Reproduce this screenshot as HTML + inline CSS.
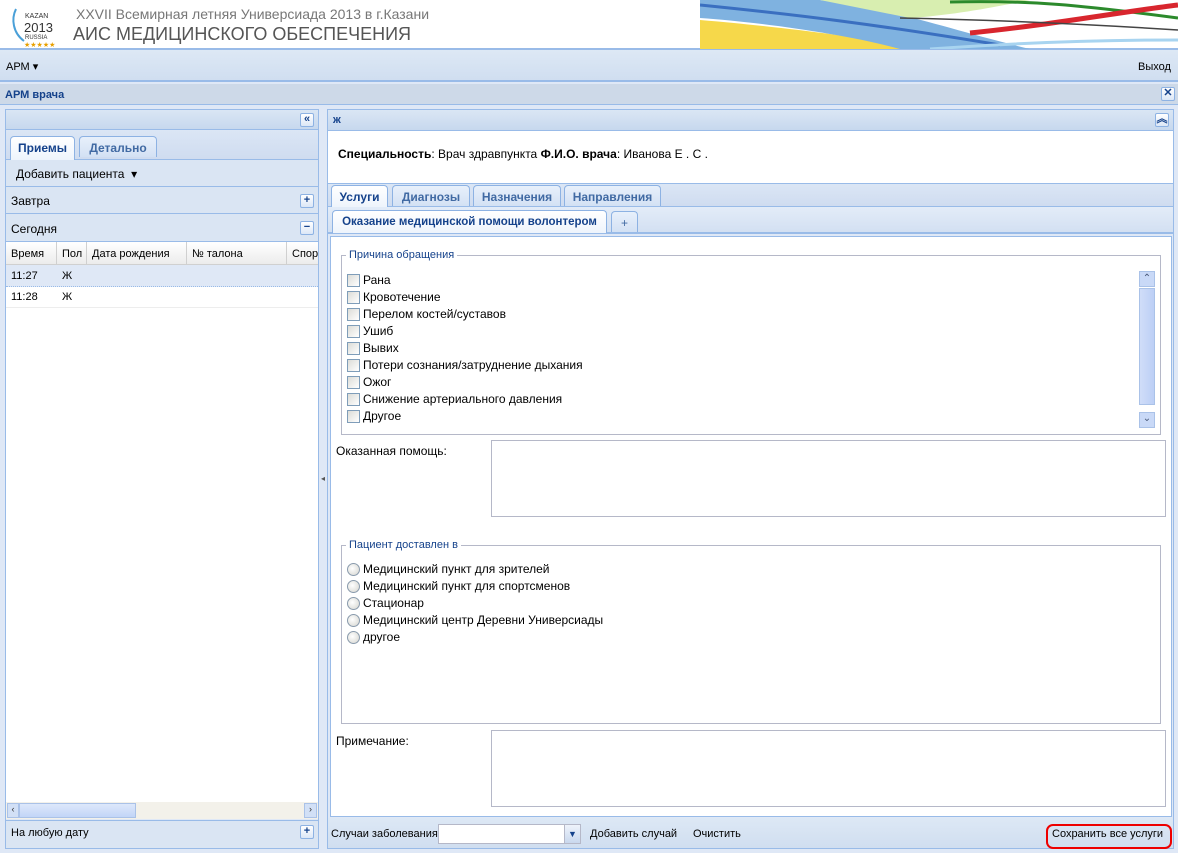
<!DOCTYPE html>
<html><head><meta charset="utf-8"><style>
*{box-sizing:border-box;margin:0;padding:0}
body{width:1178px;height:853px;overflow:hidden;position:relative;background:#dfe8f6;font-family:"Liberation Sans",Tahoma,sans-serif;font-size:12px;color:#000}
.a{position:absolute}
.hdrbar{background:linear-gradient(#dae6f4,#c7d8ee);border:1px solid #99bbe8}
.btn{position:absolute;width:14px;height:14px;border:1px solid #8db2e3;border-radius:2px;background:linear-gradient(#fff,#dbe7f7);color:#15428b;font-size:11px;line-height:11px;text-align:center;font-weight:bold}
.tab{position:absolute;border:1px solid #8db2e3;border-bottom:none;border-radius:4px 4px 0 0;background:linear-gradient(#e8f0fb,#d3e1f4);color:#416aa3;font-weight:bold;font-size:12px;text-align:center;padding-top:4px}
.tab.on{background:linear-gradient(#fff,#eef4fc);color:#15428b;height:24px}
.cb{position:absolute;width:13px;height:13px;border:1px solid #7f9db9;background:linear-gradient(135deg,#dcdcd7,#fff)}
.rb{position:absolute;width:13px;height:13px;border:1px solid #8a9bad;border-radius:50%;background:radial-gradient(circle at 40% 40%,#fff,#d4d4ce)}
.lbl{position:absolute;font-size:12px}
.fs{position:absolute;border:1px solid #b5b8c8}
.leg{position:absolute;background:#fff;color:#15428b;font-size:11px;padding:0 3px}
.ta{position:absolute;border:1px solid #b5b8c8;background:#fff}
</style></head><body>
<div class="a" style="left:0;top:0;width:1178px;height:50px;background:#fff;border-bottom:2px solid #99bbe8"></div>
<svg class="a" style="left:700px;top:0" width="478" height="49">
<path d="M0 20 C120 30 200 45 240 49 L0 49Z" fill="#f6d84a"/>
<path d="M0 0 L120 0 C200 10 250 30 330 49 L200 49 C150 35 60 22 0 18Z" fill="#7fb2e0"/>
<path d="M0 5 C100 15 180 25 300 45" stroke="#3a6fc0" stroke-width="3" fill="none"/>
<path d="M120 0 L330 0 C280 10 250 15 210 18Z" fill="#d8eeb0"/>
<path d="M250 2 C330 0 380 5 478 18" stroke="#2c8a2c" stroke-width="3" fill="none"/>
<path d="M270 33 C350 25 420 12 478 5" stroke="#d8262e" stroke-width="5" fill="none"/>
<path d="M200 18 C300 20 400 25 478 30" stroke="#444" stroke-width="1.5" fill="none"/>
<path d="M230 49 C300 44 380 40 478 40" stroke="#a8d4f0" stroke-width="3" fill="none"/>
</svg>
<svg class="a" style="left:10px;top:5px" width="45" height="44">
<path d="M6 4 C1 14 3 28 14 36" stroke="#4aa0d8" stroke-width="2" fill="none"/>
<text x="15" y="13" font-size="7" font-family="Liberation Sans" fill="#333">KAZAN</text>
<text x="14" y="27" font-size="13" font-family="Liberation Sans" fill="#333">2013</text>
<text x="15" y="34" font-size="6" font-family="Liberation Sans" fill="#333">RUSSIA</text>
<text x="14" y="42" font-size="7" fill="#e8a000">★★★★★</text>
</svg>
<div class="a" style="left:76px;top:6px;font-size:14px;color:#777">XXVII Всемирная летняя Универсиада 2013 в г.Казани</div>
<div class="a" style="left:73px;top:24px;font-size:18px;color:#555">АИС МЕДИЦИНСКОГО ОБЕСПЕЧЕНИЯ</div>
<div class="a" style="left:0;top:50px;width:1178px;height:32px;background:linear-gradient(#dde8f5,#d0def0);border-bottom:2px solid #99bbe8"></div>
<div class="a" style="left:6px;top:60px;font-size:11px">АРМ ▾</div>
<div class="a" style="left:1138px;top:61px;font-size:11px">Выход</div>
<div class="a" style="left:0;top:84px;width:1178px;height:21px;background:#cdd9e8;border-bottom:1px solid #99bbe8"></div>
<div class="a" style="left:5px;top:89px;font-weight:bold;color:#15428b;font-size:11px">АРМ врача</div>
<div class="btn" style="left:1161px;top:87px">✕</div>
<div class="a" style="left:5px;top:109px;width:314px;height:740px;border:1px solid #99bbe8;background:#dfe8f6"></div>
<div class="a hdrbar" style="left:5px;top:109px;width:314px;height:21px"></div>
<div class="btn" style="left:300px;top:113px">«</div>
<div class="a" style="left:6px;top:130px;width:312px;height:30px;background:linear-gradient(#dbe6f5,#cfdcf0);border-bottom:1px solid #99bbe8"></div>
<div class="tab on" style="left:10px;top:136px;width:65px">Приемы</div>
<div class="tab" style="left:79px;top:136px;width:78px;height:21px">Детально</div>
<div class="a" style="left:6px;top:160px;width:312px;height:27px;background:#dae5f3;border-bottom:1px solid #99bbe8"></div>
<div class="a" style="left:16px;top:167px;font-size:12px">Добавить пациента &nbsp;▾</div>
<div class="a" style="left:6px;top:187px;width:312px;height:27px;background:#dae5f3;border-bottom:1px solid #99bbe8"></div>
<div class="a" style="left:11px;top:194px">Завтра</div>
<div class="btn" style="left:300px;top:194px">+</div>
<div class="a" style="left:6px;top:214px;width:312px;height:28px;background:#dae5f3;border-bottom:1px solid #99bbe8"></div>
<div class="a" style="left:11px;top:222px">Сегодня</div>
<div class="btn" style="left:300px;top:221px">−</div>
<div class="a" style="left:6px;top:242px;width:312px;height:560px;background:#fff"></div>
<div class="a" style="left:6px;top:242px;width:312px;height:23px;background:linear-gradient(#fff,#ececec);border-bottom:1px solid #d0d0d0"></div>
<div class="a" style="left:11px;top:248px;font-size:11px">Время</div>
<div class="a" style="left:56px;top:242px;height:23px;border-left:1px solid #d0d0d0"></div>
<div class="a" style="left:62px;top:248px;font-size:11px">Пол</div>
<div class="a" style="left:86px;top:242px;height:23px;border-left:1px solid #d0d0d0"></div>
<div class="a" style="left:92px;top:248px;font-size:11px">Дата рождения</div>
<div class="a" style="left:186px;top:242px;height:23px;border-left:1px solid #d0d0d0"></div>
<div class="a" style="left:192px;top:248px;font-size:11px">№ талона</div>
<div class="a" style="left:286px;top:242px;height:23px;border-left:1px solid #d0d0d0"></div>
<div class="a" style="left:292px;top:248px;font-size:11px;width:26px;overflow:hidden;white-space:nowrap">Спорт</div>
<div class="a" style="left:6px;top:265px;width:312px;height:22px;background:#dfe8f6;border-bottom:1px dotted #99bbe8"></div>
<div class="a" style="left:11px;top:270px;font-size:11px">11:27</div><div class="a" style="left:62px;top:270px;font-size:11px">Ж</div>
<div class="a" style="left:6px;top:287px;width:312px;height:21px;border-bottom:1px solid #ededed"></div>
<div class="a" style="left:11px;top:291px;font-size:11px">11:28</div><div class="a" style="left:62px;top:291px;font-size:11px">Ж</div>
<div class="a" style="left:6px;top:802px;width:312px;height:17px;background:#f3f1ea"></div>
<div class="a" style="left:7px;top:803px;width:12px;height:15px;border:1px solid #aac2e8;background:#d2e0f6;font-size:9px;text-align:center;color:#333">‹</div>
<div class="a" style="left:19px;top:803px;width:117px;height:15px;border:1px solid #aac2e8;background:linear-gradient(#dde8fb,#c2d5f7)"></div>
<div class="a" style="left:304px;top:803px;width:13px;height:15px;border:1px solid #aac2e8;background:#d2e0f6;font-size:9px;text-align:center;color:#333">›</div>
<div class="a" style="left:6px;top:820px;width:312px;height:28px;background:#dae5f3;border-top:1px solid #99bbe8"></div>
<div class="a" style="left:11px;top:827px;font-size:11px">На любую дату</div>
<div class="btn" style="left:300px;top:825px">+</div>
<div class="a" style="left:321px;top:474px;font-size:8px;color:#555">◂</div>
<div class="a" style="left:327px;top:109px;width:847px;height:740px;border:1px solid #99bbe8;background:#dfe8f6"></div>
<div class="a hdrbar" style="left:327px;top:109px;width:847px;height:22px"></div>
<div class="a" style="left:333px;top:114px;font-weight:bold;color:#15428b;font-size:11px">ж</div>
<div class="btn" style="left:1155px;top:113px">︽</div>
<div class="a" style="left:328px;top:131px;width:845px;height:53px;background:#fff;border-bottom:1px solid #99bbe8"></div>
<div class="a" style="left:338px;top:147px;font-size:12px"><b>Специальность</b>: Врач здравпункта <b>Ф.И.О. врача</b>: Иванова Е . С .</div>
<div class="a" style="left:328px;top:184px;width:845px;height:23px;background:linear-gradient(#dbe6f5,#cfdcf0);border-bottom:1px solid #99bbe8"></div>
<div class="tab on" style="left:331px;top:185px;width:57px;height:22px">Услуги</div>
<div class="tab" style="left:392px;top:185px;width:78px;height:21px">Диагнозы</div>
<div class="tab" style="left:473px;top:185px;width:88px;height:21px">Назначения</div>
<div class="tab" style="left:564px;top:185px;width:97px;height:21px">Направления</div>
<div class="a" style="left:328px;top:207px;width:845px;height:27px;background:linear-gradient(#e3ecf8,#d3e0f2);border-bottom:2px solid #99bbe8"></div>
<div class="tab on" style="left:332px;top:210px;width:275px;height:23px;padding-top:5px;font-size:11.5px">Оказание медицинской помощи волонтером</div>
<div class="tab" style="left:611px;top:211px;width:27px;height:21px;font-weight:normal">+</div>
<div class="a" style="left:330px;top:236px;width:842px;height:581px;background:#fff;border:1px solid #99bbe8"></div>
<div class="fs" style="left:341px;top:255px;width:820px;height:180px"></div>
<div class="leg" style="left:346px;top:249px">Причина обращения</div>
<div class="cb" style="left:347px;top:274px"></div><div class="lbl" style="left:363px;top:273px">Рана</div>
<div class="cb" style="left:347px;top:291px"></div><div class="lbl" style="left:363px;top:290px">Кровотечение</div>
<div class="cb" style="left:347px;top:308px"></div><div class="lbl" style="left:363px;top:307px">Перелом костей/суставов</div>
<div class="cb" style="left:347px;top:325px"></div><div class="lbl" style="left:363px;top:324px">Ушиб</div>
<div class="cb" style="left:347px;top:342px"></div><div class="lbl" style="left:363px;top:341px">Вывих</div>
<div class="cb" style="left:347px;top:359px"></div><div class="lbl" style="left:363px;top:358px">Потери сознания/затруднение дыхания</div>
<div class="cb" style="left:347px;top:376px"></div><div class="lbl" style="left:363px;top:375px">Ожог</div>
<div class="cb" style="left:347px;top:393px"></div><div class="lbl" style="left:363px;top:392px">Снижение артериального давления</div>
<div class="cb" style="left:347px;top:410px"></div><div class="lbl" style="left:363px;top:409px">Другое</div>
<div class="a" style="left:1139px;top:271px;width:16px;height:16px;border:1px solid #aac2e8;background:#c9d9f7;font-size:10px;text-align:center;color:#4a5a7a;line-height:14px">⌃</div>
<div class="a" style="left:1139px;top:288px;width:16px;height:117px;border:1px solid #aac2e8;background:linear-gradient(90deg,#d0ddf8,#bccff6)"></div>
<div class="a" style="left:1139px;top:412px;width:16px;height:16px;border:1px solid #aac2e8;background:#c9d9f7;font-size:10px;text-align:center;color:#4a5a7a;line-height:12px">⌄</div>
<div class="lbl" style="left:336px;top:444px">Оказанная помощь:</div>
<div class="ta" style="left:491px;top:440px;width:675px;height:77px"></div>
<div class="fs" style="left:341px;top:545px;width:820px;height:179px"></div>
<div class="leg" style="left:346px;top:539px">Пациент доставлен в</div>
<div class="rb" style="left:347px;top:563px"></div><div class="lbl" style="left:363px;top:562px">Медицинский пункт для зрителей</div>
<div class="rb" style="left:347px;top:580px"></div><div class="lbl" style="left:363px;top:579px">Медицинский пункт для спортсменов</div>
<div class="rb" style="left:347px;top:597px"></div><div class="lbl" style="left:363px;top:596px">Стационар</div>
<div class="rb" style="left:347px;top:614px"></div><div class="lbl" style="left:363px;top:613px">Медицинский центр Деревни Универсиады</div>
<div class="rb" style="left:347px;top:631px"></div><div class="lbl" style="left:363px;top:630px">другое</div>
<div class="lbl" style="left:336px;top:734px">Примечание:</div>
<div class="ta" style="left:491px;top:730px;width:675px;height:77px"></div>
<div class="a" style="left:328px;top:818px;width:845px;height:30px;background:linear-gradient(#dde8f5,#d0def0)"></div>
<div class="a" style="left:331px;top:828px;font-size:11px">Случаи заболевания</div>
<div class="a" style="left:438px;top:824px;width:143px;height:20px;border:1px solid #b5b8c8;background:#fff"></div>
<div class="a" style="left:564px;top:825px;width:16px;height:18px;background:linear-gradient(#eef3fb,#c9d8ee);border-left:1px solid #b5b8c8;font-size:9px;color:#15428b;text-align:center;line-height:18px">▼</div>
<div class="a" style="left:590px;top:828px;font-size:11px">Добавить случай</div>
<div class="a" style="left:693px;top:828px;font-size:11px">Очистить</div>
<div class="a" style="left:1046px;top:824px;width:126px;height:25px;border:2px solid #e00;border-radius:7px"></div>
<div class="a" style="left:1052px;top:828px;font-size:11px">Сохранить все услуги</div>
</body></html>
